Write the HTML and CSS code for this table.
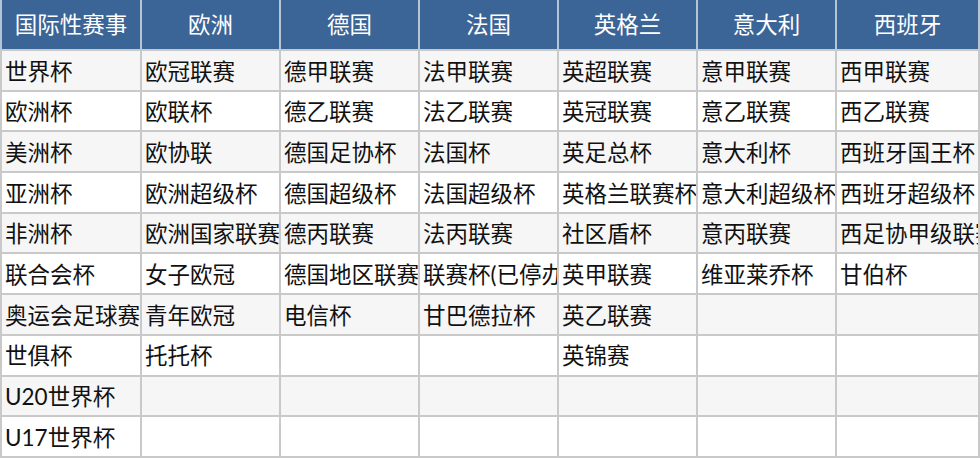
FILE: index.html
```html
<!DOCTYPE html>
<html lang="zh">
<head>
<meta charset="utf-8">
<link rel="stylesheet" href="styles.css">
</head>
<body>
<table class="sheet">
  <colgroup>
    <col class="c1"><col class="c"><col class="c"><col class="c"><col class="c"><col class="c"><col class="c7">
  </colgroup>
  <thead>
    <tr class="head"><th>国际性赛事</th><th>欧洲</th><th>德国</th><th>法国</th><th>英格兰</th><th>意大利</th><th>西班牙</th></tr>
  </thead>
  <tbody>
    <tr class="odd"><td>世界杯</td><td>欧冠联赛</td><td>德甲联赛</td><td>法甲联赛</td><td>英超联赛</td><td>意甲联赛</td><td>西甲联赛</td></tr>
    <tr><td>欧洲杯</td><td>欧联杯</td><td>德乙联赛</td><td>法乙联赛</td><td>英冠联赛</td><td>意乙联赛</td><td>西乙联赛</td></tr>
    <tr class="odd"><td>美洲杯</td><td>欧协联</td><td>德国足协杯</td><td>法国杯</td><td>英足总杯</td><td>意大利杯</td><td>西班牙国王杯</td></tr>
    <tr><td>亚洲杯</td><td>欧洲超级杯</td><td>德国超级杯</td><td>法国超级杯</td><td>英格兰联赛杯</td><td>意大利超级杯</td><td>西班牙超级杯</td></tr>
    <tr class="odd"><td>非洲杯</td><td>欧洲国家联赛</td><td>德丙联赛</td><td>法丙联赛</td><td>社区盾杯</td><td>意丙联赛</td><td>西足协甲级联赛</td></tr>
    <tr><td>联合会杯</td><td>女子欧冠</td><td>德国地区联赛</td><td>联赛杯(已停办)</td><td>英甲联赛</td><td>维亚莱乔杯</td><td>甘伯杯</td></tr>
    <tr class="odd"><td>奥运会足球赛</td><td>青年欧冠</td><td>电信杯</td><td>甘巴德拉杯</td><td>英乙联赛</td><td></td><td></td></tr>
    <tr><td>世俱杯</td><td>托托杯</td><td></td><td></td><td>英锦赛</td><td></td><td></td></tr>
    <tr class="odd"><td>U20世界杯</td><td></td><td></td><td></td><td></td><td></td><td></td></tr>
    <tr><td>U17世界杯</td><td></td><td></td><td></td><td></td><td></td><td></td></tr>
  </tbody>
</table>
</body>
</html>
```

FILE: styles.css
```css
html, body {
  margin: 0;
  padding: 0;
  background: #ffffff;
}
body {
  width: 980px;
  height: 458px;
  overflow: hidden;
  font-family: "Lato", "Noto Sans CJK SC", sans-serif;
}
.sheet {
  border-collapse: collapse;
  table-layout: fixed;
  width: 979px;
}
.sheet .c1 { width: 140px; }
.sheet .c { width: 139px; }
.sheet .c7 { width: 143px; }
.sheet tr { height: 40.7px; }
.sheet tr.head { height: 50px; }
.sheet th, .sheet td {
  white-space: nowrap;
  overflow: hidden;
  padding: 3px 0 0 3px;
  font-size: 22.5px;
  line-height: 1;
  font-weight: normal;
  text-align: left;
  vertical-align: middle;
  color: #111111;
  border: 2px solid #c9c9c9;
}
.sheet th {
  background: #3b6497;
  color: #ffffff;
  text-align: center;
  padding: 1px 0 0 0;
  border-top: none;
  border-left-color: #b7c4d6;
  border-right-color: #b7c4d6;
  border-bottom-color: #c9c9c9;
}
.sheet tr.odd td {
  background: #f6f6f6;
}
```
